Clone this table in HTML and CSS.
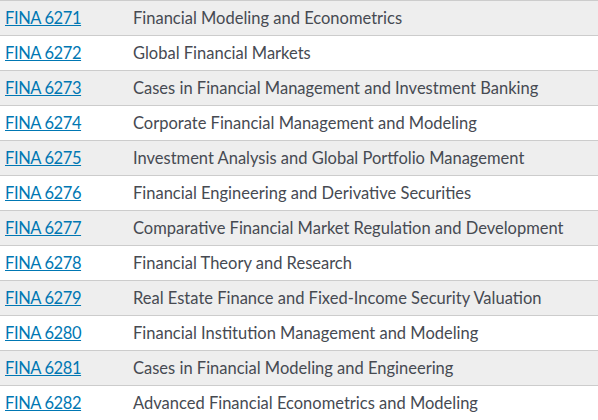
FILE: index.html
```html
<!DOCTYPE html>
<html>
<head>
<meta charset="utf-8">
<link rel="stylesheet" href="styles.css">
</head>
<body>
<table class="courses">
<tbody>
<tr><td class="code"><a href="#">FINA 6271</a></td><td class="title">Financial Modeling and Econometrics</td></tr>
<tr><td class="code"><a href="#">FINA 6272</a></td><td class="title">Global Financial Markets</td></tr>
<tr><td class="code"><a href="#">FINA 6273</a></td><td class="title">Cases in Financial Management and Investment Banking</td></tr>
<tr><td class="code"><a href="#">FINA 6274</a></td><td class="title">Corporate Financial Management and Modeling</td></tr>
<tr><td class="code"><a href="#">FINA 6275</a></td><td class="title">Investment Analysis and Global Portfolio Management</td></tr>
<tr><td class="code"><a href="#">FINA 6276</a></td><td class="title">Financial Engineering and Derivative Securities</td></tr>
<tr><td class="code"><a href="#">FINA 6277</a></td><td class="title">Comparative Financial Market Regulation and Development</td></tr>
<tr><td class="code"><a href="#">FINA 6278</a></td><td class="title">Financial Theory and Research</td></tr>
<tr><td class="code"><a href="#">FINA 6279</a></td><td class="title">Real Estate Finance and Fixed-Income Security Valuation</td></tr>
<tr><td class="code"><a href="#">FINA 6280</a></td><td class="title">Financial Institution Management and Modeling</td></tr>
<tr><td class="code"><a href="#">FINA 6281</a></td><td class="title">Cases in Financial Modeling and Engineering</td></tr>
<tr><td class="code"><a href="#">FINA 6282</a></td><td class="title">Advanced Financial Econometrics and Modeling</td></tr>
</tbody>
</table>
</body>
</html>
```
FILE: styles.css
```css
html, body {
  margin: 0;
  padding: 0;
  background: #fff;
}
body {
  font-family: Lato, "Open Sans", sans-serif;
  font-size: 16.5px;
  line-height: 20px;
  color: #464a52;
}
.courses {
  width: 100%;
  border-collapse: collapse;
  border-top: 1px solid #ccc;
}
.courses tr {
  border-bottom: 1px solid #ccc;
}
.courses tr:nth-child(odd) {
  background: #eee;
}
.courses td {
  height: 35px;
  padding: 0 5px;
  vertical-align: middle;
  box-sizing: border-box;
  white-space: nowrap;
}
.courses td.code {
  width: 128px;
}
.courses a {
  color: #0077b3;
  text-decoration: underline;
  letter-spacing: -0.4px;
}
```
